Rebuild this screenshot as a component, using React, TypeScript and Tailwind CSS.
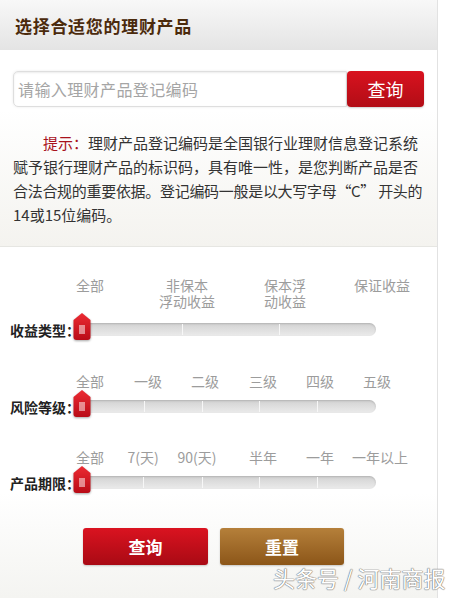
import React from 'react';

type Mark = { x: number; lines: string[] };

type SliderRow = {
  label: string;
  marks: Mark[];
  dividers: number[];
  marksTop: number;
  marksHeight: number;
  trackGap: number;
};

const cjk = "font-['Noto_Sans_CJK_SC',sans-serif]";

const rows: SliderRow[] = [
  {
    label: '收益类型：',
    marks: [
      { x: 90, lines: ['全部'] },
      { x: 187, lines: ['非保本', '浮动收益'] },
      { x: 285, lines: ['保本浮', '动收益'] },
      { x: 382, lines: ['保证收益'] },
    ],
    dividers: [102, 199],
    marksTop: 30,
    marksHeight: 32,
    trackGap: 14,
  },
  {
    label: '风险等级：',
    marks: [
      { x: 90, lines: ['全部'] },
      { x: 148, lines: ['一级'] },
      { x: 205, lines: ['二级'] },
      { x: 263, lines: ['三级'] },
      { x: 320, lines: ['四级'] },
      { x: 377, lines: ['五级'] },
    ],
    dividers: [64, 122, 179, 237],
    marksTop: 37,
    marksHeight: 16,
    trackGap: 11,
  },
  {
    label: '产品期限：',
    marks: [
      { x: 90, lines: ['全部'] },
      { x: 143, lines: ['7(天)'] },
      { x: 197, lines: ['90(天)'] },
      { x: 263, lines: ['半年'] },
      { x: 320, lines: ['一年'] },
      { x: 380, lines: ['一年以上'] },
    ],
    dividers: [63, 122, 179, 237],
    marksTop: 36,
    marksHeight: 16,
    trackGap: 11,
  },
];

function Handle() {
  return (
    <svg width="18" height="27" viewBox="0 0 18 27" className="absolute -left-[7px] -top-[10px] drop-shadow-[0_1px_1px_rgba(0,0,0,0.35)]">
      <defs>
        <linearGradient id="hg" x1="0" y1="0" x2="0" y2="1">
          <stop offset="0" stopColor="#ec2b33" />
          <stop offset="1" stopColor="#b90b17" />
        </linearGradient>
      </defs>
      <path d="M9 0 L17.5 7 L17.5 24 Q17.5 27 14.5 27 L3.5 27 Q0.5 27 0.5 24 L0.5 7 Z" fill="url(#hg)" />
      <line x1="7" y1="12" x2="7" y2="21" stroke="#fff" strokeWidth="1" />
      <line x1="9" y1="12" x2="9" y2="21" stroke="#fff" strokeWidth="1" />
      <line x1="11" y1="12" x2="11" y2="21" stroke="#fff" strokeWidth="1" />
    </svg>
  );
}

function Slider({ row }: { row: SliderRow }) {
  return (
    <div>
      <div
        className="relative"
        style={{ marginTop: row.marksTop, height: row.marksHeight }}
      >
        {row.marks.map((m, i) => (
          <div
            key={i}
            className="absolute top-0 -translate-x-1/2 text-center text-[14px] leading-[16px] text-[#9c9c9c] whitespace-nowrap"
            style={{ left: m.x }}
          >
            {m.lines.map((l, j) => (
              <React.Fragment key={j}>
                {j > 0 && <br />}
                {l}
              </React.Fragment>
            ))}
          </div>
        ))}
      </div>
      <div className="flex items-center h-[13px] pl-[10px]" style={{ marginTop: row.trackGap }}>
        <span className="w-[70px] text-[14px] font-bold text-[#222] whitespace-nowrap leading-[16px]">
          {row.label}
        </span>
        <div className="relative w-[296px] h-[13px] rounded-full bg-gradient-to-b from-[#d2d2d2] to-[#ebebeb] shadow-[inset_0_1px_2px_rgba(0,0,0,0.15)]">
          {row.dividers.map((d, i) => (
            <div
              key={i}
              className="absolute top-[1px] bottom-[1px] w-px bg-[#f7f7f7]"
              style={{ left: d }}
            />
          ))}
          <Handle />
        </div>
      </div>
    </div>
  );
}

export default function App() {
  return (
    <div className={`relative w-[466px] h-[598px] bg-white overflow-hidden ${cjk}`}>
      <div className="w-[438px] h-full border-r border-[#e2e2e2] flex flex-col">
        <div className="h-[50px] bg-gradient-to-b from-[#f8f8f8] to-[#e4e4e4] flex items-center pl-[15px]">
          <h2 className="text-[17px] font-bold text-[#4b2a0c] tracking-[0.7px] leading-none">
            选择合适您的理财产品
          </h2>
        </div>

        <div className="pt-[21px] px-[13px] flex">
          <div className="w-[335px] h-[36px] rounded-l-[5px] border border-[#dedede] shadow-[inset_0_1px_2px_rgba(0,0,0,0.08),0_0_3px_rgba(0,0,0,0.08)] flex items-center pl-[4px] text-[16px] text-[#a5a5a5] tracking-[0.4px]">
            请输入理财产品登记编码
          </div>
          <button className="w-[77px] h-[36px] rounded-[4px] bg-gradient-to-b from-[#d9121f] to-[#b20d16] text-white text-[18px] shadow-[0_1px_2px_rgba(0,0,0,0.2)]">
            查询
          </button>
        </div>

        <div className="mt-[3px] h-[137px] pt-[21px] px-[13px] bg-gradient-to-b from-white to-[#f4f3ef] border-b border-[#e6e6e2] text-[15px] leading-[24px] text-[#333]">
          <div className="whitespace-nowrap pl-[30px]">
            <span className="text-[#a8121c]">提示：</span>理财产品登记编码是全国银行业理财信息登记系统
          </div>
          <div className="whitespace-nowrap">赋予银行理财产品的标识码，具有唯一性，是您判断产品是否</div>
          <div className="whitespace-nowrap tracking-[-0.3px]">合法合规的重要依据。登记编码一般是以大写字母“C” 开头的</div>
          <div className="whitespace-nowrap">14或15位编码。</div>
        </div>

        <div className="flex-1 bg-gradient-to-b from-white from-[70%] to-[#f4f4f1]">
          {rows.map((r, i) => (
            <Slider key={i} row={r} />
          ))}
          <div className="flex gap-[12px] pl-[83px] mt-[39px]">
            <button className="w-[125px] h-[37px] rounded-[3px] bg-gradient-to-b from-[#da1320] to-[#a90a14] text-white text-[17px] font-bold shadow-[0_1px_2px_rgba(0,0,0,0.2)]">
              查询
            </button>
            <button className="w-[124px] h-[37px] rounded-[3px] bg-gradient-to-b from-[#b5803a] to-[#8c5618] text-white text-[17px] font-bold shadow-[0_1px_2px_rgba(0,0,0,0.2)]">
              重置
            </button>
          </div>
        </div>
      </div>

      <div className="absolute left-[273px] top-[563px] text-[22px] leading-[28px] text-white whitespace-nowrap [text-shadow:0_0_1px_#777,0_0_1px_#777,0_0_1px_#777]">
        头条号 / 河南商报
      </div>
    </div>
  );
}
